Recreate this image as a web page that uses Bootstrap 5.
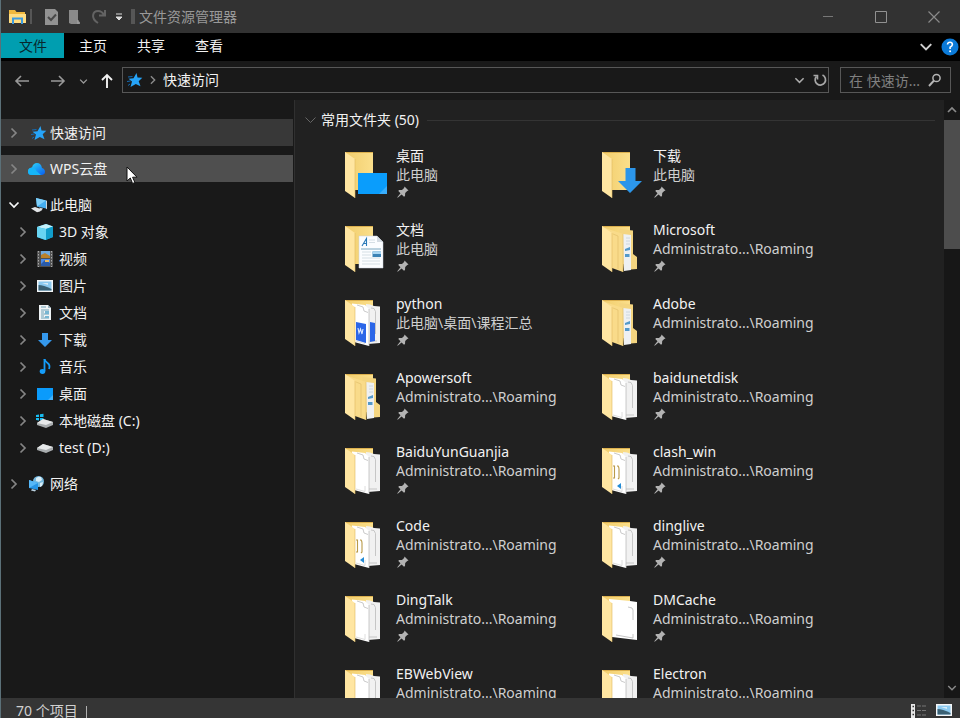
<!DOCTYPE html>
<html lang="zh-CN" data-bs-theme="dark">
<head>
<meta charset="utf-8">
<meta name="viewport" content="width=device-width, initial-scale=1">
<title>文件资源管理器</title>
<link href="https://cdn.jsdelivr.net/npm/bootstrap@5.3.0/dist/css/bootstrap.min.css" rel="stylesheet">
<style>
  body { font: 14px/20px "Noto Sans", "Noto Sans CJK SC", sans-serif; background: #191919; color: #f2f2f2; }
  a { color: inherit; text-decoration: none; }
  svg { display: block; flex: none; }
  .explorer { border-left: 1px solid #5b7078; }
  .plain-btn { background: none; border: 0; padding: 0; color: inherit; display: flex; align-items: center; justify-content: center; }
  .title-bar { height: 33px; background: #323232; color: #999; }
  .title-sep { width: 2px; height: 15px; background: #565656; }
  .caption-btn { width: 53px; height: 32px; }
  .ribbon { height: 28px; background: #000; }
  .ribbon-tab { height: 25px; padding: 0 15px; line-height: 26px; }
  .ribbon-file { background: #009eb0; color: #08282e; padding: 0 17px 0 18px; }
  .address-row { height: 39px; padding: 6px 9px 0 13px; }
  .history-btns { height: 28px; gap: 12px; padding-right: 9px; }
  .field-box { height: 26px; border: 1px solid #575757; }
  .search-box { width: 111px; margin-left: 11px; }
  .search-box input { background: none; border: 0; outline: 0; color: #999; min-width: 0; height: 24px; padding: 0 0 0 8px; }
  .search-box input::placeholder { color: #808080; opacity: 1; }
  .tree-pane { width: 292px; padding: 19px 0 0; }
  .tree-row { height: 27px; }
  .tree-row .twisty { width: 26px; padding-left: 7px; color: #858585; }
  .tree-row .glyph { width: 23px; }
  .tree-child .twisty { width: 35px; padding-left: 16px; }
  .tree-gap { margin-top: 9px; }
  .row-selected { background: #383838; }
  .row-hover { background: #4f4f4f; }
  .cursor-mark { left: 125px; top: 11px; }
  .file-pane { background: #212121; border-left: 1px solid #303030; padding: 10px 9px 0 9px; margin-left: 1px; }
  .group-line { height: 1px; background: #343434; }
  .tile-grid { display: grid; grid-template-columns: 257px 257px; padding: 16px 0 0 40px; grid-auto-rows: 74px; }
  .tile-text { line-height: 19px; padding-left: 4px; }
  .tile-text svg { margin: 2px 0 0 1px; }
  .tile-path { color: #cfcfcf; }
  .scroll-track { width: 16px; background: #171717; color: #8a8a8a; }
  .scroll-thumb { height: 129px; background: #4d4d4d; }
  .scroll-cap { height: 20px; width: 16px; }
  .status-bar { height: 20px; background: #353535; color: #d0d0d0; line-height: 26px; padding: 0 7px 0 15px; }
  .status-sep { width: 1px; height: 14px; background: #b0b0b0; }
</style>
<script src="https://cdn.jsdelivr.net/npm/bootstrap@5.3.0/dist/js/bootstrap.bundle.min.js"></script>
</head>
<body>
<svg width="0" height="0" class="position-absolute" aria-hidden="true">
  <defs>
    <linearGradient id="gold" x1="0" x2="1"><stop offset="0" stop-color="#f1cd6c"/><stop offset="1" stop-color="#fbdf8b"/></linearGradient>
    <linearGradient id="cloudFill" x1="0" x2="1" y2="1"><stop offset="0" stop-color="#2fe0fa"/><stop offset="1" stop-color="#0a5cf0"/></linearGradient>
    <symbol id="chev-right" viewBox="0 0 12 12"><path d="M3.500 1.500 8 6l-4.500 4.500" fill="none" stroke="currentColor" stroke-width="1.700"/></symbol>
    <symbol id="chev-down" viewBox="0 0 12 12"><path d="M1.500 3.500 6 8l4.500-4.500" fill="none" stroke="currentColor" stroke-width="1.700"/></symbol>
    <symbol id="chev-up" viewBox="0 0 12 12"><path d="M2 8l4-4 4 4" fill="none" stroke="currentColor" stroke-width="1.700"/></symbol>
    <symbol id="star" viewBox="0 0 16 16"><path d="M9.500 1l1 4.600 4.800.2-3.600 3.500 1.800 5-4.700-2.200-5.300 3 1.500-5.600L1.500 6.800l5-.6z" fill="#26a4f8"/><path d="M1 5l4.500-.5M0 9.500l3.500-.5M1 13.500l2-1.500" stroke="#156cb5" stroke-width="1"/></symbol>
    <symbol id="folder-base" viewBox="0 0 48 50"><path d="M1 2h28v38H1z" fill="url(#gold)"/><path d="M1 2h28v1H1z" fill="#dcb04e"/></symbol>
    <symbol id="flap" viewBox="0 0 48 50"><path d="M1 2l10 7v39L1 41z" fill="#ffe6a2"/><path d="M11 9v39" stroke="#dfb95f" stroke-width=".6"/></symbol>
    <symbol id="sheets" viewBox="0 0 48 50"><path d="M22 6l4 .5 4 1.500 6 .5V45l-12 1z" fill="#f1f1f1"/><path d="M27 10l3 .5 1.500 3V36M25 43h8" fill="none" stroke="#bbb" stroke-width=".8"/><path d="M8 5.500l13 1.500 4 4v37L10 44z" fill="#fff"/><path d="M13 7l6 2 1 4 4 1.500M25 11v37" fill="none" stroke="#bcbcbc" stroke-width=".8"/><path d="M12 43l9 2.500V40" fill="none" stroke="#d6d6d6" stroke-width=".8"/></symbol>
    <symbol id="f-desktop" viewBox="0 0 48 50"><use href="#folder-base"/><use href="#flap"/><path d="M14 23h29v21H14z" fill="#0a9dfc"/><path d="M43 36v8h-8z" fill="#39aefc"/></symbol>
    <symbol id="f-download" viewBox="0 0 48 50"><use href="#folder-base"/><use href="#flap"/><path d="M24.500 18h10v13H41L29 43 17 31h7.500z" fill="#2c96ea"/></symbol>
    <symbol id="f-doc" viewBox="0 0 48 50"><use href="#folder-base"/><use href="#flap"/><path d="M15 12h18l6 6v26H15z" fill="#fbfdff" stroke="#c9d3dc" stroke-width=".5"/><path d="M33 12v6h6" fill="#d5dce3"/><path d="M18 22l4.500-7.500V22M19.500 19.500h3" fill="none" stroke="#2a79b8" stroke-width="1.100"/><path d="M25 16h6M25 18.500h6M18 28h9M18 31h9M18 34h18M18 37h18M18 40h18" stroke="#c6d1da" stroke-width=".7"/><path d="M17 25h20" stroke="#5c8fae" stroke-width=".8"/><path d="M28.500 27.500H37V33h-8.500z" fill="#3b82b5"/><path d="M28.500 27.500H37V30h-8.500z" fill="#a9d6f2"/></symbol>
    <symbol id="f-word" viewBox="0 0 48 50"><use href="#folder-base"/><use href="#sheets"/><path d="M12 24l10 2v19l-10-3zM26 24l5 1v18l-5 1z" fill="#2b66e8"/><path d="M14 30l1 5 1.500-4 1.500 5 1-5" fill="none" stroke="#dce8ff" stroke-width="1.100"/><use href="#flap"/></symbol>
    <symbol id="f-nested" viewBox="0 0 48 50"><use href="#folder-base"/><path d="M18 5l14 1.500V30l4 3v12l-13 1z" fill="#f4d580"/><path d="M22 10l8 1v35l-7 1z" fill="#eef0f2"/><path d="M25 14h4M25 17h4M25 20h4" stroke="#c4d0da" stroke-width=".8"/><path d="M24 25l5-2v3l-5 1zM24 30h4.500v3H24z" fill="#5499ca"/><path d="M4 4l18 6v38l-11-4z" fill="#f9db8a"/><path d="M12 10l5 2v33M22 10v38" fill="none" stroke="#e2c06c" stroke-width=".7"/><use href="#flap"/></symbol>
    <symbol id="f-sheets" viewBox="0 0 48 50"><use href="#folder-base"/><use href="#sheets"/><use href="#flap"/></symbol>
    <symbol id="f-code" viewBox="0 0 48 50"><use href="#folder-base"/><use href="#sheets"/><path d="M12 20h1.500v12H12M16 20h1q1 1 1 3v9l-1 1" fill="none" stroke="#b99a49" stroke-width="1.100"/><path d="M16 40l4-3v6z" fill="#238bd5"/><use href="#flap"/></symbol>
    <symbol id="f-single" viewBox="0 0 48 50"><use href="#folder-base"/><path d="M8 5l21 2 7 1v38l-25-3z" fill="#fff"/><path d="M27 13l4 1 1 2v10M15 41l17 3V40" fill="none" stroke="#b8b8b8" stroke-width=".8"/><use href="#flap"/></symbol>
    <symbol id="pin" viewBox="0 0 12 12"><path d="M7.500.5l4 4-1.300.4-2 2.200-.2 3-1 .7-2.400-2.400L.7 11.700.3 11.300 3.500 7.300 1.300 5.100l.7-1 3-.2L7.100 1.900z" fill="#b3b3b3"/></symbol>
  </defs>
</svg>

<div class="explorer d-flex flex-column vh-100 overflow-hidden">
  <header class="title-bar d-flex align-items-center flex-shrink-0">
    <div class="d-flex align-items-center flex-grow-1 ps-2">
      <svg width="17" height="16" viewBox="0 0 17 16"><path d="M0 1h6l1.500 2H16v11H0z" fill="#f0b83d"/><path d="M0 5h17v9H0z" fill="#ffdd82"/><path d="M4 15V9.500h9V15" fill="none" stroke="#3d9be0" stroke-width="2"/></svg>
      <span class="title-sep ms-1 me-1"></span>
      <button class="plain-btn ms-2" aria-label="属性"><svg width="15" height="16" viewBox="0 0 15 16"><path d="M1 0h10l3 3v13H1z" fill="#929292"/><path d="M4 8l3 3 5-5.500" fill="none" stroke="#484848" stroke-width="2"/></svg></button>
      <button class="plain-btn ms-2" aria-label="新建文件夹"><svg width="15" height="16" viewBox="0 0 15 16"><path d="M2 1h9v11l2 1v2H4l-2-1z" fill="#8a8a8a"/><path d="M11 11v4" stroke="#aaa"/></svg></button>
      <button class="plain-btn ms-2" aria-label="恢复"><svg width="17" height="16" viewBox="0 0 17 16"><path d="M8 14C0 9 3 2 8 2q4 0 6 4M15 1v5.500H9" fill="none" stroke="#636363" stroke-width="2"/></svg></button>
      <button class="plain-btn ms-2" aria-label="自定义快速访问工具栏"><svg width="8" height="8" viewBox="0 0 8 8"><path d="M1 1h6M1 4h6L4 7z" fill="#ddd" stroke="#ddd" stroke-width="1"/></svg></button>
      <span class="title-sep ms-2 me-1 ps-1"></span>
      <span>文件资源管理器</span>
    </div>
    <button class="plain-btn caption-btn" aria-label="最小化"><svg width="12" height="12"><path d="M1 5.500h10" stroke="#777"/></svg></button>
    <button class="plain-btn caption-btn" aria-label="最大化"><svg width="12" height="12"><path d="M.5.500h11v11H.5z" fill="none" stroke="#919191"/></svg></button>
    <button class="plain-btn caption-btn" aria-label="关闭"><svg width="12" height="12"><path d="M.5.500l11 11M11.500.5l-11 11" stroke="#8a8a8a" stroke-width="1.200"/></svg></button>
  </header>

  <nav class="ribbon d-flex flex-shrink-0" aria-label="功能区">
    <a href="#" class="ribbon-tab ribbon-file">文件</a>
    <a href="#" class="ribbon-tab">主页</a>
    <a href="#" class="ribbon-tab">共享</a>
    <a href="#" class="ribbon-tab">查看</a>
    <button class="plain-btn ms-auto pe-2" aria-label="展开功能区"><svg width="14" height="14" color="#d0d0d0"><use href="#chev-down"/></svg></button>
    <button class="plain-btn" aria-label="帮助"><svg width="19" height="18" viewBox="0 0 19 18"><circle cx="9" cy="9" r="8.500" fill="#0b7ad8"/><path d="M6.500 6.500Q6.700 4.300 9 4.300t2.400 2.200Q11.400 8 9.100 9.300V11" fill="none" stroke="#fff" stroke-width="1.600"/><circle cx="9.100" cy="13.200" r="1" fill="#fff"/></svg></button>
  </nav>

  <div class="address-row d-flex flex-shrink-0">
    <div class="history-btns d-flex align-items-center">
      <button class="plain-btn" aria-label="后退"><svg width="16" height="14"><path d="M15 7H2M7 2L2 7l5 5" fill="none" stroke="#999" stroke-width="1.600"/></svg></button>
      <button class="plain-btn ps-2" aria-label="前进"><svg width="16" height="14"><path d="M1 7h13M9 2l5 5-5 5" fill="none" stroke="#999" stroke-width="1.600"/></svg></button>
      <button class="plain-btn" aria-label="最近的位置"><svg width="11" height="9" color="#999"><use href="#chev-down"/></svg></button>
      <button class="plain-btn" aria-label="向上"><svg width="12" height="16"><path d="M6 15V2M1 7l5-5 5 5" fill="none" stroke="#f2f2f2" stroke-width="1.900"/></svg></button>
    </div>
    <div class="field-box d-flex align-items-center flex-grow-1 ps-1">
      <svg width="16" height="16"><use href="#star"/></svg>
      <svg class="ms-1" width="12" height="10" color="#8a8a8a"><use href="#chev-right"/></svg>
      <a href="#" class="ps-1 flex-grow-1">快速访问</a>
      <button class="plain-btn" aria-label="以前的位置"><svg width="11" height="11" color="#aaa"><use href="#chev-down"/></svg></button>
      <button class="plain-btn ms-2" aria-label="刷新"><svg width="15" height="14" viewBox="0 0 15 14"><path d="M9.500 2.100A5.200 5.200 0 1 1 3.500 3.300" fill="none" stroke="#a6a6a6" stroke-width="1.700"/><path d="M0.500 2.500H4.500v4" fill="none" stroke="#a6a6a6" stroke-width="1.600"/></svg></button>
    </div>
    <div class="field-box search-box d-flex align-items-center pe-2">
      <label class="visually-hidden" for="search">搜索</label>
      <input id="search" type="text" class="flex-grow-1" placeholder="在 快速访...">
      <svg width="14" height="14"><circle cx="8.500" cy="5" r="3.600" fill="none" stroke="#b5b5b5" stroke-width="1.500"/><path d="M6 7.500L1 13" stroke="#b5b5b5" stroke-width="1.900"/></svg>
    </div>
  </div>

  <div class="d-flex flex-grow-1 overflow-hidden">
    <nav class="tree-pane flex-shrink-0" aria-label="导航窗格">
      <a href="#" class="tree-row row-selected d-flex align-items-center"><span class="twisty"><svg width="12" height="12"><use href="#chev-right"/></svg></span><span class="glyph ps-1"><svg width="16" height="16"><use href="#star"/></svg></span><span>快速访问</span></a>
      <a href="#" class="tree-row tree-gap row-hover d-flex align-items-center position-relative"><span class="twisty"><svg width="12" height="12"><use href="#chev-right"/></svg></span><span class="glyph"><svg width="18" height="16" viewBox="0 0 18 16"><path d="M4.500 14Q1 14 1 10.500T5 6.500Q6 2 10 2t5 5q3 1 3 3.700T15 14z" fill="url(#cloudFill)"/><path d="M5 6.500q3 0 4.500 3.500L14 14H5Q1 14 1 10.500t4-4z" fill="#16b6f8"/></svg></span><span>WPS云盘</span>
        <svg class="cursor-mark position-absolute" width="12" height="19" viewBox="0 0 12 19"><path d="M1 1v14l3.300-3 2.300 5.500 2.300-1-2.300-5.300H11z" fill="#fff" stroke="#111"/></svg></a>
      <a href="#" class="tree-row tree-gap d-flex align-items-center"><span class="twisty text-light"><svg width="12" height="12"><use href="#chev-down"/></svg></span><span class="glyph ps-1"><svg width="17" height="16" viewBox="0 0 17 16"><path d="M5 1l10 2.500v8L6 9.500z" fill="#45aef0"/><path d="M5 1l10 2.500L6 9.500z" fill="#7fd0fa"/><path d="M15 3.500l1 .3v8.500l-1-.5zM8 10.500l4 1-2 2.500" fill="#cfd5d9"/><path d="M0 11.500l4-1.500 7 2.500-2 2-3 .8z" fill="#e2e4e6"/></svg></span><span>此电脑</span></a>
      <a href="#" class="tree-row tree-child d-flex align-items-center"><span class="twisty"><svg width="12" height="12"><use href="#chev-right"/></svg></span><span class="glyph"><svg width="18" height="16" viewBox="0 0 18 16"><path d="M1 3l9-3 7 2.500V13l-8 3-8-3z" fill="#23b4e4"/><path d="M1 3l9-3 7 2.500L10 5z" fill="#c5f1fb"/><path d="M1 3l9 2v11L1 13z" fill="#68d4f2"/><path d="M10 5l7-2.500V13l-7 3z" fill="#119dca"/></svg></span><span>3D 对象</span></a>
      <a href="#" class="tree-row tree-child d-flex align-items-center"><span class="twisty"><svg width="12" height="12"><use href="#chev-right"/></svg></span><span class="glyph"><svg width="18" height="18" viewBox="0 0 18 18"><path d="M1 1h16v16H1z" fill="#505050"/><path d="M2.500 1v16M15.500 1v16" stroke="#aaa" stroke-dasharray="1.500 1.500"/><path d="M5 1h9v7H5z" fill="#6fa9df"/><path d="M5 5l4-2 5 3v2H5z" fill="#ba812b"/><path d="M5 9h9v7H5z" fill="#4c8bea"/><path d="M5 14l4-4 5 3v3H5z" fill="#2a5ba9"/><path d="M9 10h4v2H9z" fill="#e7b75f"/></svg></span><span>视频</span></a>
      <a href="#" class="tree-row tree-child d-flex align-items-center"><span class="twisty"><svg width="12" height="12"><use href="#chev-right"/></svg></span><span class="glyph"><svg width="18" height="14" viewBox="0 0 18 14"><g id="photo"><path d="M1 1h16v12H1z" fill="#f4f6f7"/><path d="M2.500 2.500h13v9h-13z" fill="#8ccaf0"/><path d="M2.500 6q5 0 13 4v1.500h-13z" fill="#3b6174"/><path d="M6 4h6v2z" fill="#d7ecf8"/></g></svg></span><span>图片</span></a>
      <a href="#" class="tree-row tree-child d-flex align-items-center"><span class="twisty"><svg width="12" height="12"><use href="#chev-right"/></svg></span><span class="glyph"><svg width="18" height="17" viewBox="0 0 18 17"><path d="M3 1h9l3 3v12H3z" fill="#eef3f5"/><path d="M12 1v3h3" fill="#9bb5c2"/><path d="M5 3h5M5 6h8M5 8h3M5 10h8M5 12h3M5 14h8" stroke="#6fa0b5"/><path d="M9 7h4v3H9zM9 12h4v2H9z" fill="#77b6d2"/></svg></span><span>文档</span></a>
      <a href="#" class="tree-row tree-child d-flex align-items-center"><span class="twisty"><svg width="12" height="12"><use href="#chev-right"/></svg></span><span class="glyph"><svg width="18" height="16" viewBox="0 0 18 16"><path d="M6 1h6v7h4l-7 7-7-7h4z" fill="#3598ec"/></svg></span><span>下载</span></a>
      <a href="#" class="tree-row tree-child d-flex align-items-center"><span class="twisty"><svg width="12" height="12"><use href="#chev-right"/></svg></span><span class="glyph"><svg width="18" height="17" viewBox="0 0 18 17"><path d="M8.500 1v12" stroke="#159dfa" stroke-width="1.800"/><ellipse cx="6.500" cy="13.500" rx="2.800" ry="2.400" fill="#159dfa"/><path d="M8.500 1q0 2 3 4t1.500 6" fill="none" stroke="#159dfa" stroke-width="1.800"/></svg></span><span>音乐</span></a>
      <a href="#" class="tree-row tree-child d-flex align-items-center"><span class="twisty"><svg width="12" height="12"><use href="#chev-right"/></svg></span><span class="glyph"><svg width="18" height="14" viewBox="0 0 18 14"><path d="M1 1h16v12H1z" fill="#0b9bfb"/><path d="M17 8v5h-5z" fill="#45b3fc"/></svg></span><span>桌面</span></a>
      <a href="#" class="tree-row tree-child d-flex align-items-center"><span class="twisty"><svg width="12" height="12"><use href="#chev-right"/></svg></span><span class="glyph"><svg width="18" height="16" viewBox="0 0 18 16"><path d="M0 2l3-.5V4H0zM4 1.300L7.500.8V4H4zM0 5h3v2.500L0 7zM4 5h3.500v3L4 7.600z" fill="#18bdf2"/><path d="M1 10l6-4 10 3v3l-7 3-9-3z" fill="#a9adaf"/><path d="M1 10l6-4 10 3-7 3z" fill="#e7e9ea"/></svg></span><span>本地磁盘 (C:)</span></a>
      <a href="#" class="tree-row tree-child d-flex align-items-center"><span class="twisty"><svg width="12" height="12"><use href="#chev-right"/></svg></span><span class="glyph"><svg width="18" height="12" viewBox="0 0 18 12"><path d="M1 6l6-4 10 3v3l-7 3-9-3z" fill="#a9adaf"/><path d="M1 6l6-4 10 3-7 3z" fill="#e7e9ea"/></svg></span><span>test (D:)</span></a>
      <a href="#" class="tree-row tree-gap d-flex align-items-center"><span class="twisty"><svg width="12" height="12"><use href="#chev-right"/></svg></span><span class="glyph"><svg width="18" height="17" viewBox="0 0 18 17"><circle cx="11.500" cy="6.500" r="5.500" fill="#75b9df"/><path d="M9 3q3-2 5-1l1 3-3 2-3-1zM13 8l3-1-1 4-2 1z" fill="#d9eef8"/><path d="M2 5l9 3v7l-9-2z" fill="#2695e6"/><path d="M2 5l9 3-9 5z" fill="#56b8f8"/><path d="M5 14l4 1-1 1.500-4-1z" fill="#bbd2e0"/></svg></span><span>网络</span></a>
    </nav>

    <main class="file-pane flex-grow-1 overflow-hidden">
      <div class="d-flex align-items-center">
        <button class="plain-btn me-1" aria-label="折叠分组"><svg width="13" height="12"><path d="M1.500 3.500L6.500 8.500l5-5" fill="none" stroke="#666"/></svg></button>
        <span>常用文件夹 (50)</span>
        <span class="group-line flex-grow-1 ms-2"></span>
      </div>
      <div class="tile-grid">
        <a href="#" class="d-flex"><svg class="mt-1" width="48" height="50"><use href="#f-desktop"/></svg><span class="tile-text"><span class="d-block">桌面</span><span class="d-block tile-path">此电脑</span><svg width="12" height="12"><use href="#pin"/></svg></span></a>
        <a href="#" class="d-flex"><svg class="mt-1" width="48" height="50"><use href="#f-download"/></svg><span class="tile-text"><span class="d-block">下载</span><span class="d-block tile-path">此电脑</span><svg width="12" height="12"><use href="#pin"/></svg></span></a>
        <a href="#" class="d-flex"><svg class="mt-1" width="48" height="50"><use href="#f-doc"/></svg><span class="tile-text"><span class="d-block">文档</span><span class="d-block tile-path">此电脑</span><svg width="12" height="12"><use href="#pin"/></svg></span></a>
        <a href="#" class="d-flex"><svg class="mt-1" width="48" height="50"><use href="#f-nested"/></svg><span class="tile-text"><span class="d-block">Microsoft</span><span class="d-block tile-path">Administrato...\Roaming</span><svg width="12" height="12"><use href="#pin"/></svg></span></a>
        <a href="#" class="d-flex"><svg class="mt-1" width="48" height="50"><use href="#f-word"/></svg><span class="tile-text"><span class="d-block">python</span><span class="d-block tile-path">此电脑\桌面\课程汇总</span><svg width="12" height="12"><use href="#pin"/></svg></span></a>
        <a href="#" class="d-flex"><svg class="mt-1" width="48" height="50"><use href="#f-nested"/></svg><span class="tile-text"><span class="d-block">Adobe</span><span class="d-block tile-path">Administrato...\Roaming</span><svg width="12" height="12"><use href="#pin"/></svg></span></a>
        <a href="#" class="d-flex"><svg class="mt-1" width="48" height="50"><use href="#f-nested"/></svg><span class="tile-text"><span class="d-block">Apowersoft</span><span class="d-block tile-path">Administrato...\Roaming</span><svg width="12" height="12"><use href="#pin"/></svg></span></a>
        <a href="#" class="d-flex"><svg class="mt-1" width="48" height="50"><use href="#f-sheets"/></svg><span class="tile-text"><span class="d-block">baidunetdisk</span><span class="d-block tile-path">Administrato...\Roaming</span><svg width="12" height="12"><use href="#pin"/></svg></span></a>
        <a href="#" class="d-flex"><svg class="mt-1" width="48" height="50"><use href="#f-sheets"/></svg><span class="tile-text"><span class="d-block">BaiduYunGuanjia</span><span class="d-block tile-path">Administrato...\Roaming</span><svg width="12" height="12"><use href="#pin"/></svg></span></a>
        <a href="#" class="d-flex"><svg class="mt-1" width="48" height="50"><use href="#f-code"/></svg><span class="tile-text"><span class="d-block">clash_win</span><span class="d-block tile-path">Administrato...\Roaming</span><svg width="12" height="12"><use href="#pin"/></svg></span></a>
        <a href="#" class="d-flex"><svg class="mt-1" width="48" height="50"><use href="#f-code"/></svg><span class="tile-text"><span class="d-block">Code</span><span class="d-block tile-path">Administrato...\Roaming</span><svg width="12" height="12"><use href="#pin"/></svg></span></a>
        <a href="#" class="d-flex"><svg class="mt-1" width="48" height="50"><use href="#f-sheets"/></svg><span class="tile-text"><span class="d-block">dinglive</span><span class="d-block tile-path">Administrato...\Roaming</span><svg width="12" height="12"><use href="#pin"/></svg></span></a>
        <a href="#" class="d-flex"><svg class="mt-1" width="48" height="50"><use href="#f-sheets"/></svg><span class="tile-text"><span class="d-block">DingTalk</span><span class="d-block tile-path">Administrato...\Roaming</span><svg width="12" height="12"><use href="#pin"/></svg></span></a>
        <a href="#" class="d-flex"><svg class="mt-1" width="48" height="50"><use href="#f-single"/></svg><span class="tile-text"><span class="d-block">DMCache</span><span class="d-block tile-path">Administrato...\Roaming</span><svg width="12" height="12"><use href="#pin"/></svg></span></a>
        <a href="#" class="d-flex"><svg class="mt-1" width="48" height="50"><use href="#f-sheets"/></svg><span class="tile-text"><span class="d-block">EBWebView</span><span class="d-block tile-path">Administrato...\Roaming</span><svg width="12" height="12"><use href="#pin"/></svg></span></a>
        <a href="#" class="d-flex"><svg class="mt-1" width="48" height="50"><use href="#f-sheets"/></svg><span class="tile-text"><span class="d-block">Electron</span><span class="d-block tile-path">Administrato...\Roaming</span><svg width="12" height="12"><use href="#pin"/></svg></span></a>
      </div>
    </main>

    <div class="scroll-track d-flex flex-column flex-shrink-0">
      <button class="plain-btn scroll-cap" aria-label="向上滚动"><svg width="12" height="12"><use href="#chev-up"/></svg></button>
      <div class="scroll-thumb"></div>
      <button class="plain-btn scroll-cap mt-auto" aria-label="向下滚动"><svg width="10" height="10"><use href="#chev-down"/></svg></button>
    </div>
  </div>

  <footer class="status-bar d-flex flex-shrink-0 overflow-hidden">
    <span>70 个项目</span>
    <span class="status-sep ms-2 mt-2"></span>
    <button class="plain-btn ms-auto pt-1" aria-label="详细信息"><svg width="17" height="15" viewBox="0 0 17 15"><path d="M1 1h4v14H1z" fill="#e8e8e8"/><path d="M2.500 3.500h1.500M2.500 7.500h1.500M2.500 11.500h1.500" stroke="#333" stroke-width="1.500"/><path d="M7 3h4M12 3h4M7 7.500h4M12 7.500h4M7 12h4M12 12h4" stroke="#777"/></svg></button>
    <button class="plain-btn ms-2 pt-1" aria-label="大图标"><svg width="18" height="14" viewBox="0 0 18 14"><use href="#photo"/></svg></button>
  </footer>
</div>
</body>
</html>
